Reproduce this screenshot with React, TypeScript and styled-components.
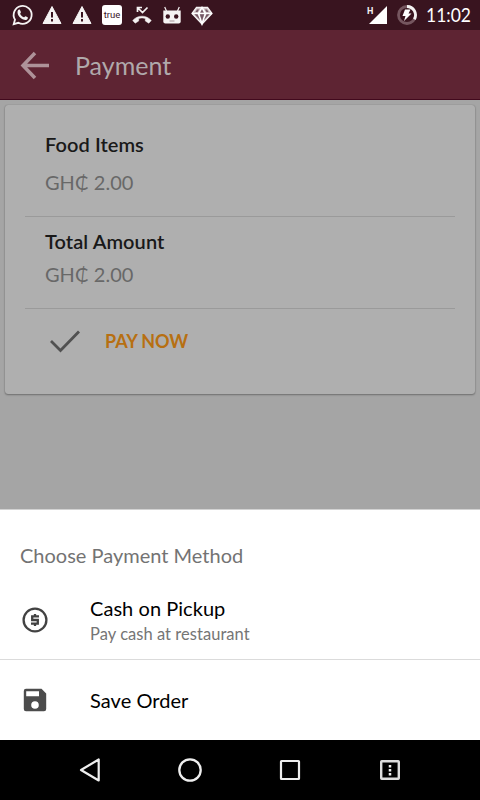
import React from 'react';
import styled, { createGlobalStyle } from 'styled-components';

const Global = createGlobalStyle`
  * { box-sizing: border-box; }
  body { margin: 0; background: #a5a5a5; font-family: Lato, sans-serif; }
  svg { display: block; flex: none; }
`;
const Screen = styled.div`
  width: 480px; height: 800px; display: flex; flex-direction: column; overflow: hidden; background: #a5a5a5;
`;
const StatusBar = styled.div`
  height: 30px; flex: none; background: #39141f; display: flex; align-items: center; padding: 0 10px 0 12px; color: #f2eff0;
`;
const Notifications = styled.div`
  display: flex; align-items: center; gap: 10px; flex: 1;
  svg { width: 20px; height: 22px; overflow: visible; }
`;
const TrueBadge = styled.div`
  width: 20px; height: 20px; border-radius: 3px; background: #fff; color: #39141f;
  font: 400 9.5px/20px Roboto, sans-serif; text-align: center;
`;
const SignalGroup = styled.div`
  display: flex; align-items: center; height: 30px; gap: 10px;
`;
const Signal = styled.div`
  display: flex; height: 18px; width: 20px;
`;
const Network = styled.span`
  font: 700 9px/10px Roboto, sans-serif; width: 2px; overflow: visible;
`;
const Clock = styled.span`
  font-size: 19px; line-height: 30px; margin-left: -1px; color: #fff; width: 44px; white-space: nowrap;
  transform: scaleX(.92); transform-origin: left center;
`;
const AppBar = styled.header`
  height: 70px; flex: none; background: #5e2433; border-bottom: 1px solid #42091d; display: flex; align-items: center; padding: 0 0 0 20px;
`;
const Title = styled.h1`
  margin: 1px 0 0 25px; font-size: 25px; line-height: 30px; font-weight: 400; color: #b0a9ab;
`;
const Content = styled.main`
  flex: 1; padding: 5px 5px 0;
`;
const Card = styled.section`
  height: 289px; background: #afafaf; border-radius: 3px; padding: 0 20px; box-shadow: 0 1px 2px rgba(0,0,0,.32), 0 0 1px rgba(0,0,0,.3);
`;
const Entry = styled.div<{ $h: number; $top: number; $gap: number }>`
  height: ${p => p.$h}px; padding: ${p => p.$top}px 20px 0; border-bottom: 1px solid #9a9a9a;
  display: flex; flex-direction: column; gap: ${p => p.$gap}px;
`;
const Label = styled.span`
  font-size: 20px; line-height: 24px; font-weight: 600; color: #191919; letter-spacing: .07px;
`;
const Amount = styled.span`
  font-size: 20px; line-height: 24px; color: #686868;
`;
const PayButton = styled.button`
  border: 0; background: none; padding: 0 0 0 25px; height: 64px; display: flex; align-items: center; gap: 25px;
  font: 700 18px/24px Lato, sans-serif; letter-spacing: -.1px; color: #b76f12;
`;
const Sheet = styled.section`
  height: 231px; flex: none; background: #fff; border-top: 1px solid #d2d2d2;
`;
const SheetTitle = styled.h2`
  margin: 0; padding: 33px 20px 0; height: 70px; font-size: 20px; line-height: 24px; font-weight: 400; color: #737373;
`;
const Option = styled.div<{ $h: number; $line?: boolean }>`
  height: ${p => p.$h}px; display: flex; align-items: center; padding-left: 20px; gap: 40px;
  border-bottom: ${p => (p.$line ? '1px solid #dbdbdb' : '0')};
`;
const OptionText = styled.div`
  display: flex; flex-direction: column; padding-top: 2px;
`;
const OptionTitle = styled.span`
  font-size: 20px; line-height: 26px; letter-spacing: .05px; color: #000;
`;
const OptionHint = styled.span`
  font-size: 16.5px; line-height: 26px; letter-spacing: .04px; color: #757575;
`;
const NavBar = styled.nav`
  height: 60px; flex: none; background: #000; display: flex; align-items: center; justify-content: center; gap: 70px;
`;

const Warning = () => (
  <svg viewBox="0 0 20 22"><path d="M10 2.500 19 19.500H1Z" fill="#f5f3f3" stroke="#f5f3f3" strokeLinejoin="round" /><path d="M10 8v5.500M10 15v2.500" stroke="#39141f" strokeWidth="2" /></svg>
);

export default function App() {
  return (
    <>
      <Global />
      <Screen>
        <StatusBar>
          <Notifications>
            <svg viewBox="0 0 20 22">
              <path d="M1.7 20.2 3 15.6a9 9 0 1 1 3.4 3.2Z" fill="none" stroke="#f5f3f3" strokeWidth="1.8" />
              <path d="M6 6.3c.6-.8 1.6-1 2-.2l.9 2c.2.6-.9 1.4-.7 1.8.8 1.6 2 2.7 3.7 3.4.5.1 1.2-1.3 1.7-1.1l2 1c.8.4 0 2-.9 2.5-1.5.8-3.7 0-5.7-1.4C6.8 12.8 4.500 9 6 6.300Z" fill="#f5f3f3" />
            </svg>
            <Warning />
            <Warning />
            <TrueBadge>true</TrueBadge>
            <svg viewBox="0 0 20 22">
              <path d="M5.500 8V3.500H10M5.500 3.500l5 5 5-5" fill="none" stroke="#f5f3f3" strokeWidth="1.7" />
              <path d="M.7 16.500C5.500 10.700 14.500 10.700 19.300 16.500L16.800 19.200 13.300 17V14.400C11.200 13.700 8.800 13.700 6.700 14.400V17L3.200 19.200Z" fill="#f5f3f3" stroke="#f5f3f3" strokeWidth=".5" strokeLinejoin="round" />
            </svg>
            <svg viewBox="0 0 20 22">
              <path d="M2.700 3 4.500 7M17.300 3 15.500 7" stroke="#f5f3f3" strokeWidth="1.200" />
              <path d="M1.300 6.500H18.700V17.500Q18.700 19.500 16.700 19.500H3.300Q1.300 19.500 1.300 17.500Z" fill="#f5f3f3" />
              <circle cx="5.800" cy="12.500" r="2.200" fill="#39141f" /><circle cx="14.200" cy="12.500" r="2.200" fill="#39141f" />
              <path d="M7.500 17h5" stroke="#a5969b" />
            </svg>
            <svg viewBox="0 0 20 22">
              <path d="M4.500 3.500h11L20 9.500 10 20 0 9.500Z" fill="#cbbdc1" stroke="#f5f3f3" strokeWidth="1.300" />
              <path d="M6.500 9.500 10 3.500l3.500 6M0 9.500h20M6.500 9.500 10 20l3.500-10.500" fill="none" stroke="#fff" strokeWidth="1.500" />
              <path d="M7.800 10.200h4.400L10 17ZM2.500 10.200H5.500L8 16ZM17.500 10.200H14.500L12 16ZM10 5.500l1.700 3H8.300ZM5 5.500H7L5.500 8H3.500ZM15 5.500H13L14.500 8H16.500Z" fill="#765965" />
            </svg>
          </Notifications>
          <SignalGroup>
            <Signal>
              <Network>H</Network>
              <svg width="18" height="18"><path d="M18 0V18H0Z" fill="#fff" /></svg>
            </Signal>
            <svg width="20" height="20" viewBox="0 0 20 20">
              <circle cx="10" cy="10" r="8.500" fill="none" stroke="#75565f" strokeWidth="2.800" />
              <path d="M10 1.500A8.500 8.500 0 0 1 17.300 14.300" fill="none" stroke="#f5f3f3" strokeWidth="2.800" />
              <path d="M8 4.500H13.500L11.500 8.500H14.500L7 16 8.500 11H5.500Z" fill="#fff" />
            </svg>
            <Clock>11:02</Clock>
          </SignalGroup>
        </StatusBar>
        <AppBar>
          <svg width="30" height="30"><path d="M15 3 3 15.500 15 28M3 15.500H29" fill="none" stroke="#ae9299" strokeWidth="3.500" /></svg>
          <Title>Payment</Title>
        </AppBar>
        <Content>
          <Card>
            <Entry $h={112} $top={27} $gap={14}><Label>Food Items</Label><Amount>GH₵ 2.00</Amount></Entry>
            <Entry $h={92} $top={12} $gap={9}><Label>Total Amount</Label><Amount>GH₵ 2.00</Amount></Entry>
            <PayButton>
              <svg width="30" height="30"><path d="M1 15 10.500 24.500 29 5.500" fill="none" stroke="#515151" strokeWidth="2.800" /></svg>
              PAY NOW
            </PayButton>
          </Card>
        </Content>
        <Sheet>
          <SheetTitle>Choose Payment Method</SheetTitle>
          <Option $h={80} $line>
            <svg width="30" height="30" viewBox="0 0 30 30">
              <circle cx="15" cy="15" r="11.400" fill="none" stroke="#424242" strokeWidth="2.300" />
              <path d="M19 11.300H12.200V15H17.800V18.700H11M15 9V11.300M15 18.700V21" fill="none" stroke="#424242" strokeWidth="2.300" />
            </svg>
            <OptionText><OptionTitle>Cash on Pickup</OptionTitle><OptionHint>Pay cash at restaurant</OptionHint></OptionText>
          </Option>
          <Option $h={80}>
            <svg width="30" height="30" viewBox="0 0 30 30">
              <path fillRule="evenodd" d="M6 3.800H21.500L26.200 8.500V24Q26.200 26.200 24 26.200H6Q3.800 26.200 3.800 24V6Q3.800 3.800 6 3.800ZM6.200 6.200V11.200H19V6.200ZM15 16.200a3.800 3.800 0 1 0 0 7.600a3.800 3.800 0 0 0 0-7.600Z" fill="#4c4c4c" />
            </svg>
            <OptionTitle>Save Order</OptionTitle>
          </Option>
        </Sheet>
        <NavBar>
          <svg width="30" height="30"><path d="M23.700 4.500V25.500L6 15Z" fill="none" stroke="#eee" strokeWidth="2.200" strokeLinejoin="round" /></svg>
          <svg width="30" height="30"><circle cx="15" cy="15" r="10.700" fill="none" stroke="#eee" strokeWidth="2.300" /></svg>
          <svg width="30" height="30"><rect x="6" y="6" width="18" height="18" rx=".5" fill="none" stroke="#eee" strokeWidth="2.200" /></svg>
          <svg width="30" height="30"><rect x="6.200" y="6.200" width="17.600" height="17.600" rx=".5" fill="none" stroke="#ddd" strokeWidth="2.400" /><path d="M15 10v2.500M15 14v2.500M15 18v2.500" stroke="#eee" strokeWidth="2.500" /></svg>
        </NavBar>
      </Screen>
    </>
  );
}
